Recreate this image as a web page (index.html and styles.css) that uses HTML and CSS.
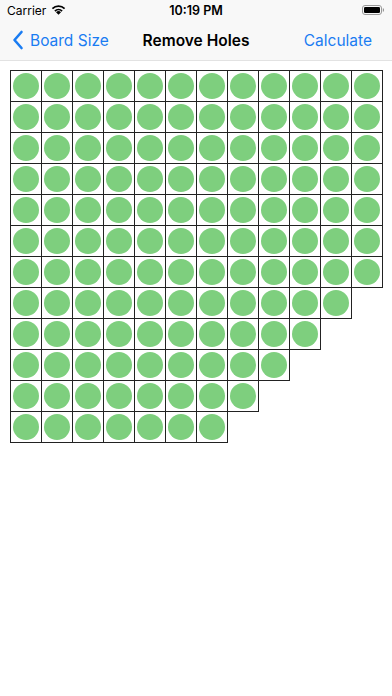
FILE: index.html
```html
<!DOCTYPE html>
<html>
<head>
<meta charset="utf-8">
<link rel="stylesheet" href="styles.css">
</head>
<body>
<header class="top">
  <div class="status">
    <div class="status-left">
      <span class="carrier">Carrier</span>
      <svg class="wifi" width="15" height="11" viewBox="0 0 15 11">
        <path d="M7.5 10.8 L5 8.2 A3.5 3.5 0 0 1 10 8.2 Z" fill="#000"/>
        <path d="M3.3 6.5 A6 6 0 0 1 11.7 6.5 L10.5 7.7 A4.3 4.3 0 0 0 4.5 7.7 Z" fill="#000"/>
        <path d="M0.8 4 A9.6 9.6 0 0 1 14.2 4 L13 5.2 A7.8 7.8 0 0 0 2 5.2 Z" fill="#000"/>
      </svg>
    </div>
    <span class="time">10:19 PM</span>
    <div class="status-right">
      <svg class="battery" width="22" height="10" viewBox="0 0 22 10">
        <rect x="0.5" y="0.5" width="19" height="9" rx="2.5" fill="none" stroke="#999" stroke-width="1"/>
        <rect x="2" y="2" width="16" height="6" rx="1.3" fill="#000"/>
        <path d="M20.8 3.3 a1.3 1.3 0 0 1 0 3.4 Z" fill="#999"/>
      </svg>
    </div>
  </div>
  <nav class="nav">
    <div class="back">
      <svg class="chev" width="12" height="20" viewBox="0 0 12 20">
        <path d="M9.5 2 L2.5 10 L9.5 18" fill="none" stroke="#1a7cf2" stroke-width="2.6" stroke-linecap="round" stroke-linejoin="round"/>
      </svg>
      <span>Board Size</span>
    </div>
    <div class="title">Remove Holes</div>
    <div class="action">Calculate</div>
  </nav>
</header>
<main class="board">
  <div class="row"><div class="c"></div><div class="c"></div><div class="c"></div><div class="c"></div><div class="c"></div><div class="c"></div><div class="c"></div><div class="c"></div><div class="c"></div><div class="c"></div><div class="c"></div><div class="c"></div></div>
  <div class="row"><div class="c"></div><div class="c"></div><div class="c"></div><div class="c"></div><div class="c"></div><div class="c"></div><div class="c"></div><div class="c"></div><div class="c"></div><div class="c"></div><div class="c"></div><div class="c"></div></div>
  <div class="row"><div class="c"></div><div class="c"></div><div class="c"></div><div class="c"></div><div class="c"></div><div class="c"></div><div class="c"></div><div class="c"></div><div class="c"></div><div class="c"></div><div class="c"></div><div class="c"></div></div>
  <div class="row"><div class="c"></div><div class="c"></div><div class="c"></div><div class="c"></div><div class="c"></div><div class="c"></div><div class="c"></div><div class="c"></div><div class="c"></div><div class="c"></div><div class="c"></div><div class="c"></div></div>
  <div class="row"><div class="c"></div><div class="c"></div><div class="c"></div><div class="c"></div><div class="c"></div><div class="c"></div><div class="c"></div><div class="c"></div><div class="c"></div><div class="c"></div><div class="c"></div><div class="c"></div></div>
  <div class="row"><div class="c"></div><div class="c"></div><div class="c"></div><div class="c"></div><div class="c"></div><div class="c"></div><div class="c"></div><div class="c"></div><div class="c"></div><div class="c"></div><div class="c"></div><div class="c"></div></div>
  <div class="row"><div class="c"></div><div class="c"></div><div class="c"></div><div class="c"></div><div class="c"></div><div class="c"></div><div class="c"></div><div class="c"></div><div class="c"></div><div class="c"></div><div class="c"></div><div class="c"></div></div>
  <div class="row"><div class="c"></div><div class="c"></div><div class="c"></div><div class="c"></div><div class="c"></div><div class="c"></div><div class="c"></div><div class="c"></div><div class="c"></div><div class="c"></div><div class="c"></div></div>
  <div class="row"><div class="c"></div><div class="c"></div><div class="c"></div><div class="c"></div><div class="c"></div><div class="c"></div><div class="c"></div><div class="c"></div><div class="c"></div><div class="c"></div></div>
  <div class="row"><div class="c"></div><div class="c"></div><div class="c"></div><div class="c"></div><div class="c"></div><div class="c"></div><div class="c"></div><div class="c"></div><div class="c"></div></div>
  <div class="row"><div class="c"></div><div class="c"></div><div class="c"></div><div class="c"></div><div class="c"></div><div class="c"></div><div class="c"></div><div class="c"></div></div>
  <div class="row"><div class="c"></div><div class="c"></div><div class="c"></div><div class="c"></div><div class="c"></div><div class="c"></div><div class="c"></div></div>
</main>
</body>
</html>
```
FILE: styles.css
```css
* { box-sizing: border-box; }
html, body {
  margin: 0;
  padding: 0;
  background: #fff;
  font-family: Inter, "Liberation Sans", sans-serif;
  width: 392px;
  height: 696px;
  overflow: hidden;
}
.top {
  background: #f8f8f8;
  border-bottom: 1px solid #e2e2e2;
  height: 61px;
}
.status {
  height: 20px;
  display: flex;
  align-items: center;
  justify-content: space-between;
  padding: 0 8px 0 7px;
  position: relative;
}
.status-left {
  display: flex;
  align-items: center;
  gap: 5px;
}
.carrier {
  font-size: 12px;
  color: #000;
}
.wifi { margin-top: -1px; }
.time {
  position: absolute;
  left: 0;
  right: 0;
  text-align: center;
  font-size: 12.5px;
  font-weight: 600;
  color: #000;
  pointer-events: none;
}
.status-right { display: flex; align-items: center; }
.nav {
  height: 40px;
  display: flex;
  align-items: center;
  justify-content: space-between;
  padding: 0 20px 0 12px;
  position: relative;
}
.back {
  display: flex;
  align-items: center;
  gap: 6px;
  color: #1a7cf2;
  font-size: 15.5px;
}
.title {
  position: absolute;
  left: 0;
  right: 0;
  text-align: center;
  font-size: 15.5px;
  font-weight: 600;
  color: #000;
  pointer-events: none;
}
.action {
  color: #1a7cf2;
  font-size: 15.5px;
}
.board {
  padding: 9px 0 0 10px;
  display: flex;
  flex-direction: column;
  align-items: flex-start;
}
.row {
  display: flex;
  gap: 1px;
  padding: 1px;
  background: #222;
  margin-top: -1px;
}
.row:first-child { margin-top: 0; }
.c {
  width: 30px;
  height: 30px;
  background: #fff;
  display: flex;
  align-items: center;
  justify-content: center;
}
.c::before {
  content: "";
  width: 26px;
  height: 26px;
  border-radius: 50%;
  background: #7ecf7e;
}
```
